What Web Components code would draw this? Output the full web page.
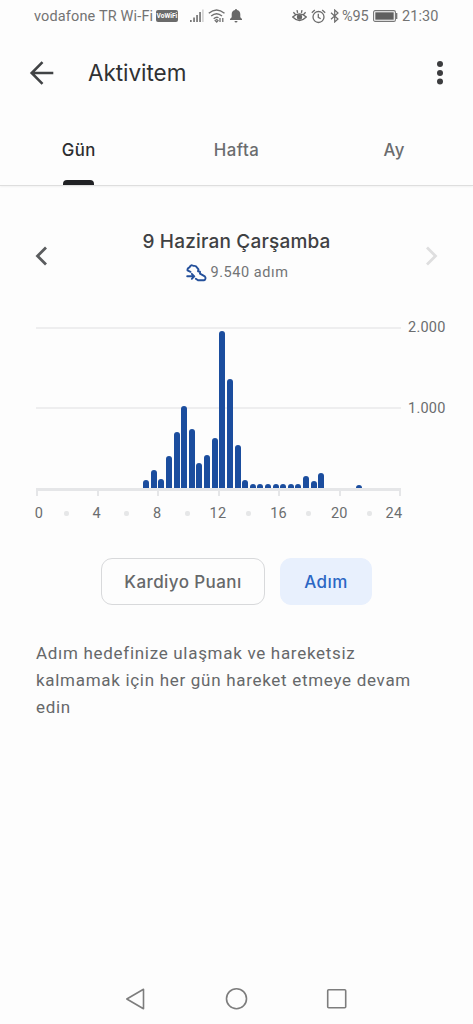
<!DOCTYPE html>
<html lang="tr">
<head>
<meta charset="utf-8">
<title>Aktivitem</title>
<style>
html,body{margin:0;background:#fdfdfd}
body{width:473px;height:1024px;overflow:hidden;font-family:Roboto,"Liberation Sans",sans-serif;color:#5f6265}
</style>
</head>
<body>
<activity-screen></activity-screen>
<script>
const define = (name, html, setup) => customElements.define(name, class extends HTMLElement {
  connectedCallback() {
    if (this.shadowRoot) return;
    const t = document.createElement('template');
    t.innerHTML = html;
    this.attachShadow({mode: 'open'}).append(t.content.cloneNode(true));
    if (setup) setup(this, this.shadowRoot);
  }
});

define('status-bar', `
<style>
:host{display:flex;align-items:center;height:32px;padding:0 34px;box-sizing:border-box;font-size:14.5px;color:#737373}
svg{display:block;flex:none}
span{white-space:nowrap;flex:none}
.carrier{width:119px;margin-right:3px;letter-spacing:.15px}
.badge{width:22px;height:12px;border-radius:2px;background:#6b6b6b;color:#fff;font:bold 6.6px/12px Roboto,sans-serif;text-align:center;margin-right:12px}
.pct{width:28px;margin:0 3px 0 2px;letter-spacing:-.1px}
.time{width:37px;margin-left:4px;letter-spacing:.1px}
</style>
<span class="carrier">vodafone TR Wi-Fi</span><span class="badge">VoWiFi</span>
<svg width="15" height="14" viewBox="0 0 15 14" fill="#757575"><path d="M0 11h1.7v2H0zM3.2 8.5h1.7V13H3.200zM6.200 6h1.700v7H6.200zM9.200 3h1.700v10H9.200z"/><path d="M12.300 .5h1.200V13h-1.200z" fill="#c4c4c4"/></svg>
<svg style="margin-left:3px" width="18" height="14" viewBox="0 0 18 14" fill="none" stroke="#707070" stroke-width="1.400"><path d="M.8 4.300Q8.500-2.400 16.500 4.300M3.200 7Q8.500 2.300 14 7M5.700 9.700Q8.500 7.300 10.500 8.700"/><path d="M7.200 11.500l1.500 1.500 1.300-1.500-1.300-1zM12 9v4M14.800 9v4" stroke-width="1.300"/></svg>
<svg style="margin-left:4px" width="12" height="14" viewBox="0 0 12 14" fill="#686868"><path d="M5 1a1 1 0 0 1 2 0c2.200.5 3.300 2.200 3.300 4.300v2.900L12 10v1H0v-1l1.700-1.800V5.300C1.700 3.200 2.800 1.500 5 1zM4.500 12h3a1.500 1.500 0 0 1-3 0z"/></svg>
<svg style="margin-left:50px" width="15" height="14" viewBox="0 0 15 14" fill="none" stroke="#686868" stroke-width="1.300"><path d="M.7 8Q7.500 1.700 14.300 8 7.500 15 .7 8zM1.400 3.300l2 2.200M5 1.200l.6 2.600M13.600 3.300l-2 2.200M10 1.200l-.6 2.600"/><circle cx="7.500" cy="8" r="2" fill="#686868"/></svg>
<svg style="margin-left:4px" width="15" height="15" viewBox="0 0 15 15" fill="none" stroke="#6c6c6c" stroke-width="1.300"><circle cx="7.500" cy="8" r="5.500"/><path d="M7.300 4.800v3.500l2.400 1.500M.8 3.700l3-2.700M14.200 3.700l-3-2.700"/></svg>
<svg style="margin-left:4px" width="10" height="14" viewBox="0 0 10 14" fill="none" stroke="#6c6c6c" stroke-width="1.200"><path d="M1 3.800l7 6.200-3.300 3V1L8 4 1 10.200"/></svg>
<span class="pct">%95</span>
<svg width="25" height="12" viewBox="0 0 25 12"><rect x=".6" y=".6" width="21.800" height="10.800" rx="1.500" fill="none" stroke="#777" stroke-width="1.100"/><path d="M2.300 2.300h18.400v7.400H2.300z" fill="#606060"/><path d="M23.600 3v6" stroke="#777" stroke-width="1.500"/></svg>
<span class="time">21:30</span>`);

define('app-bar', `
<style>
:host{display:flex;align-items:center;height:81px;padding:0 20px 0 29px}
h1{margin:0 auto 0 33px;font:400 22.500px Inter,sans-serif;letter-spacing:-.05px;color:#303133}
</style>
<svg width="26" height="26" viewBox="0 0 26 26" fill="none" stroke="#414345" stroke-width="2.600"><path d="M24.300 13H3M13.500 2.200L2.700 13l10.800 10.800"/></svg>
<h1><slot></slot></h1>
<svg width="26" height="26" viewBox="0 0 26 26" fill="#3c3d3f"><circle cx="13" cy="4" r="3"/><circle cx="13" cy="12.900" r="3"/><circle cx="13" cy="21.600" r="3"/></svg>`);

define('tab-item', `
<style>
:host{flex:1;display:flex;flex-direction:column;align-items:center;font:450 16.800px/20px Inter,sans-serif;letter-spacing:.45px;color:#6a6c6e}
:host([selected]){font-weight:500;color:#2c2d2f}
span{margin-top:27px}
i{width:31px;height:5px;margin-top:auto;border-radius:4px 4px 0 0}
:host([selected]) i{background:#202124}
</style><span><slot></slot></span><i></i>`);

define('tab-bar', `
<style>:host{display:flex;height:72px;border-bottom:1px solid #dedede;box-shadow:0 1px 2px #0000000c}</style><slot></slot>`);

define('day-switcher', `
<style>
:host{display:flex;justify-content:space-between;height:68px;margin-top:43px;padding:0 34px}
.side{margin-top:17px}
.mid{text-align:center}
h2{margin:0;font:450 19px/26px Inter,sans-serif;letter-spacing:.2px;color:#3f4143}
p{display:flex;align-items:center;justify-content:center;gap:4px;margin:7px 0 0;padding-left:1px;font-size:14.500px;line-height:22px;letter-spacing:.55px;color:#727476}
</style>
<svg class="side" width="15" height="20" viewBox="0 0 15 20" fill="none" stroke="#5a5c5e" stroke-width="2.800"><path d="M12 1.500L3.500 10l8.500 8.500"/></svg>
<div class="mid"><h2><slot></slot></h2>
<p><svg width="21" height="18" viewBox="0 0 21 18" fill="none" stroke="#24509b" stroke-width="1.900" stroke-linejoin="round" stroke-linecap="round"><path d="M4.500 7.800L1.500 6.300C1.300 4.500 2.500 3.600 3.600 3.300 4 1.500 5.500 1 6.600 1.500 8 2.300 9 1.600 9.800 2.200L12.500 5.300 12 7.300 14 7.700 14 9.700 18.800 12.300C20 13.500 19.700 16 18 16.300H12L9.800 14.800M1.200 12.300H7.800M5.800 9.800L8.300 12.300 5.800 14.800"/></svg><slot name="steps"></slot></p></div>
<svg class="side" width="15" height="20" viewBox="0 0 15 20" fill="none" stroke="#dededf" stroke-width="2.800"><path d="M3 1.500L11.500 10 3 18.500"/></svg>`);

define('steps-chart', `
<style>
:host{display:grid;grid-template-columns:365px auto;column-gap:7px;margin:30px 0 0 36px;width:max-content;font-size:14.500px;letter-spacing:.25px;color:#6b6d6f}
.plot{height:161px;display:grid;grid-template-columns:repeat(48,1fr);align-items:end;justify-items:center;box-sizing:border-box;background:linear-gradient(#eeeeef,#eeeeef) 0 0/100% 2px no-repeat,linear-gradient(#eeeeef,#eeeeef) 0 80px/100% 2px no-repeat}
.plot i{width:6px;border-radius:3px 3px 0 0;background:#1b4d9e}
.scale{display:flex;flex-direction:column;gap:61px;line-height:20px;margin-top:-9px;height:161px}
.ticks{height:7px;border-top:3px solid #e5e6e8;display:flex;justify-content:space-between;grid-column:1}
.ticks i{width:2px;height:5px;background:#e5e6e8}
.hours{grid-column:1;display:flex;justify-content:space-between;align-items:center;height:20px;margin-top:5px;padding-right:1px}
.hours span{width:0;display:flex;justify-content:center}
.hours span:first-child{margin:0 -3px 0 3px}
.hours span:last-child{margin:0 6px 0 -6px}
.hours b{width:5px;height:5px;flex:none;border-radius:2px;background:#e6e7e8}
</style>
<div class="plot"></div><div class="scale"><span>2.000</span><span>1.000</span></div>
<div class="ticks"></div><div class="hours"></div>`, (host, root) => {
  const bars = {14:8,15:18,16:9.500,17:32.500,18:56,19:82,20:59,21:25,22:33,23:50,24:157,25:109,26:43,27:8,28:4,29:4,30:4,31:4,32:4,33:4,34:4,35:12,36:7,37:15.500,38:.4,42:3.500};
  root.querySelector('.plot').innerHTML = Array.from({length:48}, (_, i) => `<i style="height:${bars[i] || 0}px"></i>`).join('');
  root.querySelector('.ticks').innerHTML = '<i></i>'.repeat(7);
  root.querySelector('.hours').innerHTML = Array.from({length:13}, (_, i) => `<span>${i % 2 ? '<b></b>' : i * 2}</span>`).join('');
});

define('choice-chip', `
<style>
:host{box-sizing:border-box;width:164px;height:47px;display:flex;align-items:center;justify-content:center;border:1.500px solid #d8d9db;border-radius:11px;font:450 17px Inter,sans-serif;letter-spacing:.42px;color:#66686a}
:host([selected]){width:92px;font-weight:500;border-color:#e8f0fd;background:#e8f0fd;color:#2c67c4}
</style><slot></slot>`);

define('chip-row', `<style>:host{display:flex;gap:15px;justify-content:center;margin-top:35px}</style><slot></slot>`);

define('hint-text', `<style>:host{display:block;width:390px;margin:35px 0 0 36px;font-size:17px;line-height:26.800px;letter-spacing:.7px;color:#66686a}</style><slot></slot>`);

define('system-nav', `
<style>:host{display:flex;justify-content:space-between;align-items:center;height:50px;margin-top:auto;padding:0 125px}svg{display:block}</style>
<svg width="22" height="24" viewBox="0 0 22 24" fill="none" stroke="#7d7d7d" stroke-width="1.600" stroke-linejoin="round"><path d="M18.500 2.300v19.500L1.800 12z"/></svg>
<svg width="24" height="24" viewBox="0 0 24 24" fill="none" stroke="#7d7d7d" stroke-width="1.600"><circle cx="11.500" cy="11.700" r="10"/></svg>
<svg width="22" height="24" viewBox="0 0 22 24" fill="none" stroke="#7d7d7d" stroke-width="1.600"><rect x="1.700" y="2.700" width="18" height="18" rx="1"/></svg>`);

define('activity-screen', `
<style>:host{display:flex;flex-direction:column;height:1024px;width:473px}</style>
<status-bar></status-bar>
<app-bar>Aktivitem</app-bar>
<tab-bar><tab-item selected>Gün</tab-item><tab-item>Hafta</tab-item><tab-item>Ay</tab-item></tab-bar>
<day-switcher>9 Haziran Çarşamba<span slot="steps">9.540 adım</span></day-switcher>
<steps-chart></steps-chart>
<chip-row><choice-chip>Kardiyo Puanı</choice-chip><choice-chip selected>Adım</choice-chip></chip-row>
<hint-text>Adım hedefinize ulaşmak ve hareketsiz<br>kalmamak için her gün hareket etmeye devam<br>edin</hint-text>
<system-nav></system-nav>`);
</script>
</body>
</html>
